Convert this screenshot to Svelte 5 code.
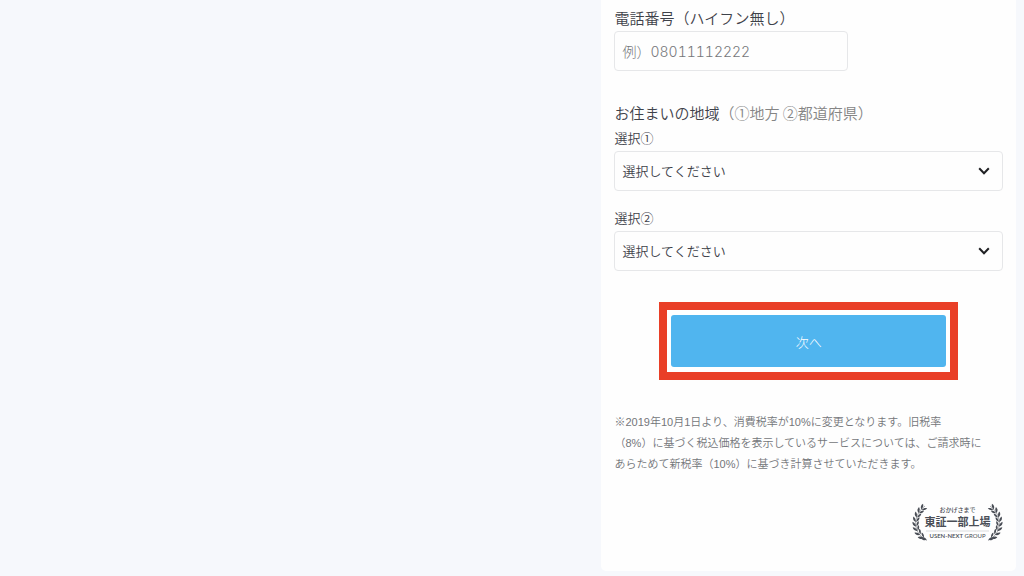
<script>
  const regions = ['北海道・東北', '関東', '中部', '近畿', '中国・四国', '九州・沖縄'];

  // Leaves along one laurel branch, from the foot to the tip.
  const stems = [
    [10.5, 34, -50],
    [7.2, 30.5, -38],
    [5, 26.5, -22],
    [4, 22, -6],
    [4, 17.5, 8],
    [5.2, 13, 22],
    [7.5, 8.8, 36],
    [10.5, 5.5, 48]
  ];
</script>

{#snippet branch()}
  <path d="M15 37.5C6 33 2.5 25 4 17C5 11 8 7 13 3" fill="none" stroke="#555960" stroke-width="0.5" />
  {#each stems as [x, y, turn]}
    <g transform="translate({x} {y}) rotate({turn})">
      <path d="M0 1.5C-2.8 .8-3.6-1.2-3.2-3.6C-1.3-2.8-.3-1 0 1.5Z" />
      <path d="M.4 1.5C2.8-.1 3.4-1.6 3-3.6C1.2-2.8 .4-1 .4 1.5Z" />
    </g>
  {/each}
  <path d="M9 35.2C11 33.6 13.5 34.2 14.6 36.8C12.5 37.8 10.5 37.2 9 35.2Z" />
{/snippet}

{#snippet region(id, label)}
  <div class="field">
    <label class="sub" for={id}>{label}</label>
    <div class="select">
      <select {id}>
        <option>選択してください</option>
        {#each regions as name}<option>{name}</option>{/each}
      </select>
      <svg viewBox="0 0 12 8" aria-hidden="true"><path d="M1.2 1.2L6 6.2L10.8 1.2" /></svg>
    </div>
  </div>
{/snippet}

<main lang="ja">
  <form class="card">
    <div class="phone">
      <label class="title" for="tel">電話番号（ハイフン無し）</label>
      <input id="tel" type="tel" placeholder="例）08011112222" />
    </div>

    <fieldset>
      <legend class="title">お住まいの地域<span>（①地方 ②都道府県）</span></legend>
      {@render region('area', '選択①')}
      {@render region('prefecture', '選択②')}
    </fieldset>

    <div class="highlight">
      <button type="button">次へ</button>
    </div>

    <p class="note">
      ※2019年10月1日より、消費税率が10%に変更となります。旧税率<br />（8%）に基づく税込価格を表示しているサービスについては、ご請求時に<br />あらためて新税率（10%）に基づき計算させていただきます。
    </p>

    <svg class="award" viewBox="0 0 91 40" fill="#4a4e56">
      {@render branch()}
      <g transform="translate(91 0) scale(-1 1)">{@render branch()}</g>
      <text x="45.5" y="9" font-size="6" font-weight="500" text-anchor="middle">おかげさまで</text>
      <text x="45.5" y="23" font-size="11" font-weight="700" text-anchor="middle">東証一部上場</text>
      <path d="M14 28H77" stroke="#c4c6ca" stroke-width="0.6" />
      <text class="latin" x="45.5" y="35" font-size="6" text-anchor="middle"><tspan font-weight="600">USEN-NEXT</tspan> GROUP</text>
    </svg>
  </form>
</main>

<style>
  :global(body) {
    margin: 0;
    background: #f6f8fc;
  }

  main {
    display: flex;
    justify-content: flex-end;
    padding: 0 8px 5px 0;
    color: #3e424a;
    font-family: 'Noto Sans CJK JP', sans-serif;
    font-weight: 350;
  }

  .card {
    display: flex;
    flex-direction: column;
    box-sizing: border-box;
    width: 40.8%;
    padding: 6px 13px 28px;
    border-radius: 0 0 5px 5px;
    background: #fefefe;
  }

  .phone {
    display: flex;
    flex-direction: column;
  }

  .title {
    padding: 0 0 1px;
    font-size: 15px;
    line-height: 24px;
  }

  .title span {
    color: #858585;
  }

  input,
  select {
    box-sizing: border-box;
    height: 40px;
    border: 1px solid #e6e7e9;
    border-radius: 4px;
    background: #fefefe;
    color: inherit;
    font: inherit;
  }

  input {
    width: 60%;
    padding: 0 7px;
    font-family: Inter, 'Noto Sans CJK JP', sans-serif;
    font-size: 14px;
    font-weight: 300;
    font-variant-numeric: tabular-nums;
  }

  input::placeholder {
    color: #75777a;
    opacity: 1;
  }

  fieldset {
    display: flex;
    flex-direction: column;
    gap: 15px;
    min-width: 0;
    margin: 30px 0 0;
    padding: 0;
    border: 0;
  }

  .field {
    display: flex;
    flex-direction: column;
    gap: 1px;
  }

  .sub {
    font-size: 13px;
    line-height: 24px;
  }

  .select {
    display: grid;
    align-items: center;
  }

  .select > * {
    grid-area: 1 / 1;
  }

  select {
    width: 100%;
    padding: 0 32px 2px 7px;
    appearance: none;
    font-size: 13px;
  }

  .select svg {
    justify-self: end;
    width: 12px;
    height: 8px;
    margin-right: 13px;
    fill: none;
    stroke: #202124;
    stroke-width: 2;
    pointer-events: none;
  }

  .highlight {
    display: flex;
    align-self: center;
    box-sizing: border-box;
    width: 77%;
    margin-top: 31px;
    padding: 5px 4px;
    border: 8px solid #e93f27;
    background: #ffffff;
  }

  button {
    flex: 1;
    height: 52px;
    padding: 0;
    border: 0;
    border-radius: 3px;
    background: #50b5ef;
    color: #ffffff;
    font: inherit;
    font-size: 13px;
    font-weight: 300;
  }

  .note {
    margin: 32px 0 0;
    color: #74767a;
    font-family: 'Liberation Sans', 'Noto Sans CJK JP', sans-serif;
    font-size: 11px;
    line-height: 21px;
    white-space: nowrap;
  }

  .award {
    align-self: flex-end;
    width: 91px;
    height: 40px;
    margin-top: 28px;
  }

  .latin {
    font-family: Lato, sans-serif;
    font-weight: 400;
  }
</style>
